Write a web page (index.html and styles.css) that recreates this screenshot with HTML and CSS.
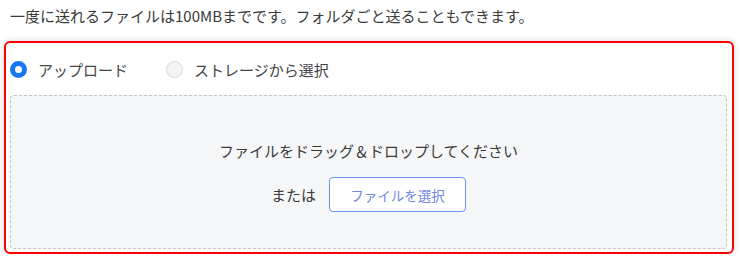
FILE: index.html
```html
<!DOCTYPE html>
<html lang="ja">
<head>
    <meta charset="UTF-8">
    <title>ファイル送信</title>
    <link rel="stylesheet" href="styles.css">
</head>
<body>

    <p class="note">一度に送れるファイルは100MBまでです。フォルダごと送ることもできます。</p>

    <!-- アップロード方法 -->
    <div class="upload-box">
        <div class="source-tabs">
            <label class="source checked"><span class="radio"></span>アップロード</label>
            <label class="source"><span class="radio"></span>ストレージから選択</label>
        </div>

        <div class="drop-area">
            <p class="drop-text">ファイルをドラッグ＆ドロップしてください</p>
            <div class="pick-row">
                <span>または</span>
                <button class="pick-btn">ファイルを選択</button>
            </div>
        </div>
    </div>

</body>
</html>
```

FILE: styles.css
```css
/* 全体 */
body {
    margin: 0;
    padding: 0;
    background: #fff;
    color: #333;
    font-family: "Noto Sans CJK JP", "Noto Sans", sans-serif;
}

.note {
    margin: 0;
    padding: 5px 0 0 10px;
    font-size: 15px;
    line-height: 22px;
    color: #3a3a3a;
}

/* 赤枠 */
.upload-box {
    box-sizing: border-box;
    width: 730px;
    height: 213px;
    margin: 14px 0 0 4px;
    border: 2px solid #ff0000;
    border-radius: 6px;
    padding: 0 5px 3px 4px;
    box-shadow: 0 0 6px rgba(0, 0, 0, 0.18);
    display: flex;
    flex-direction: column;
}

.source-tabs {
    height: 52px;
    display: flex;
    align-items: center;
    gap: 38px;
}

.source {
    display: flex;
    align-items: center;
    gap: 11px;
    font-size: 15px;
    color: #444;
}

.radio {
    box-sizing: border-box;
    width: 17px;
    height: 17px;
    border-radius: 50%;
    border: 1px solid #d6d6d6;
    background: #f4f4f4;
}

.source.checked .radio {
    border: 5px solid #1677f2;
    background: #fff;
}

/* ドロップエリア */
.drop-area {
    flex: 1;
    border: 1px dashed #c4c4c4;
    border-radius: 4px;
    background: #f5f6f8;
    display: flex;
    flex-direction: column;
    align-items: center;
}

.drop-text {
    margin: 44px 0 0;
    font-size: 15px;
    line-height: 22px;
    color: #3a3a3a;
}

.pick-row {
    display: flex;
    align-items: center;
    gap: 13px;
    margin-top: 15px;
    font-size: 15px;
    color: #3a3a3a;
}

.pick-btn {
    width: 137px;
    height: 35px;
    background: #fff;
    border: 1px solid #6c95f0;
    border-radius: 4px;
    color: #7185e3;
    font-family: inherit;
    font-size: 13.5px;
    cursor: pointer;
}
```
